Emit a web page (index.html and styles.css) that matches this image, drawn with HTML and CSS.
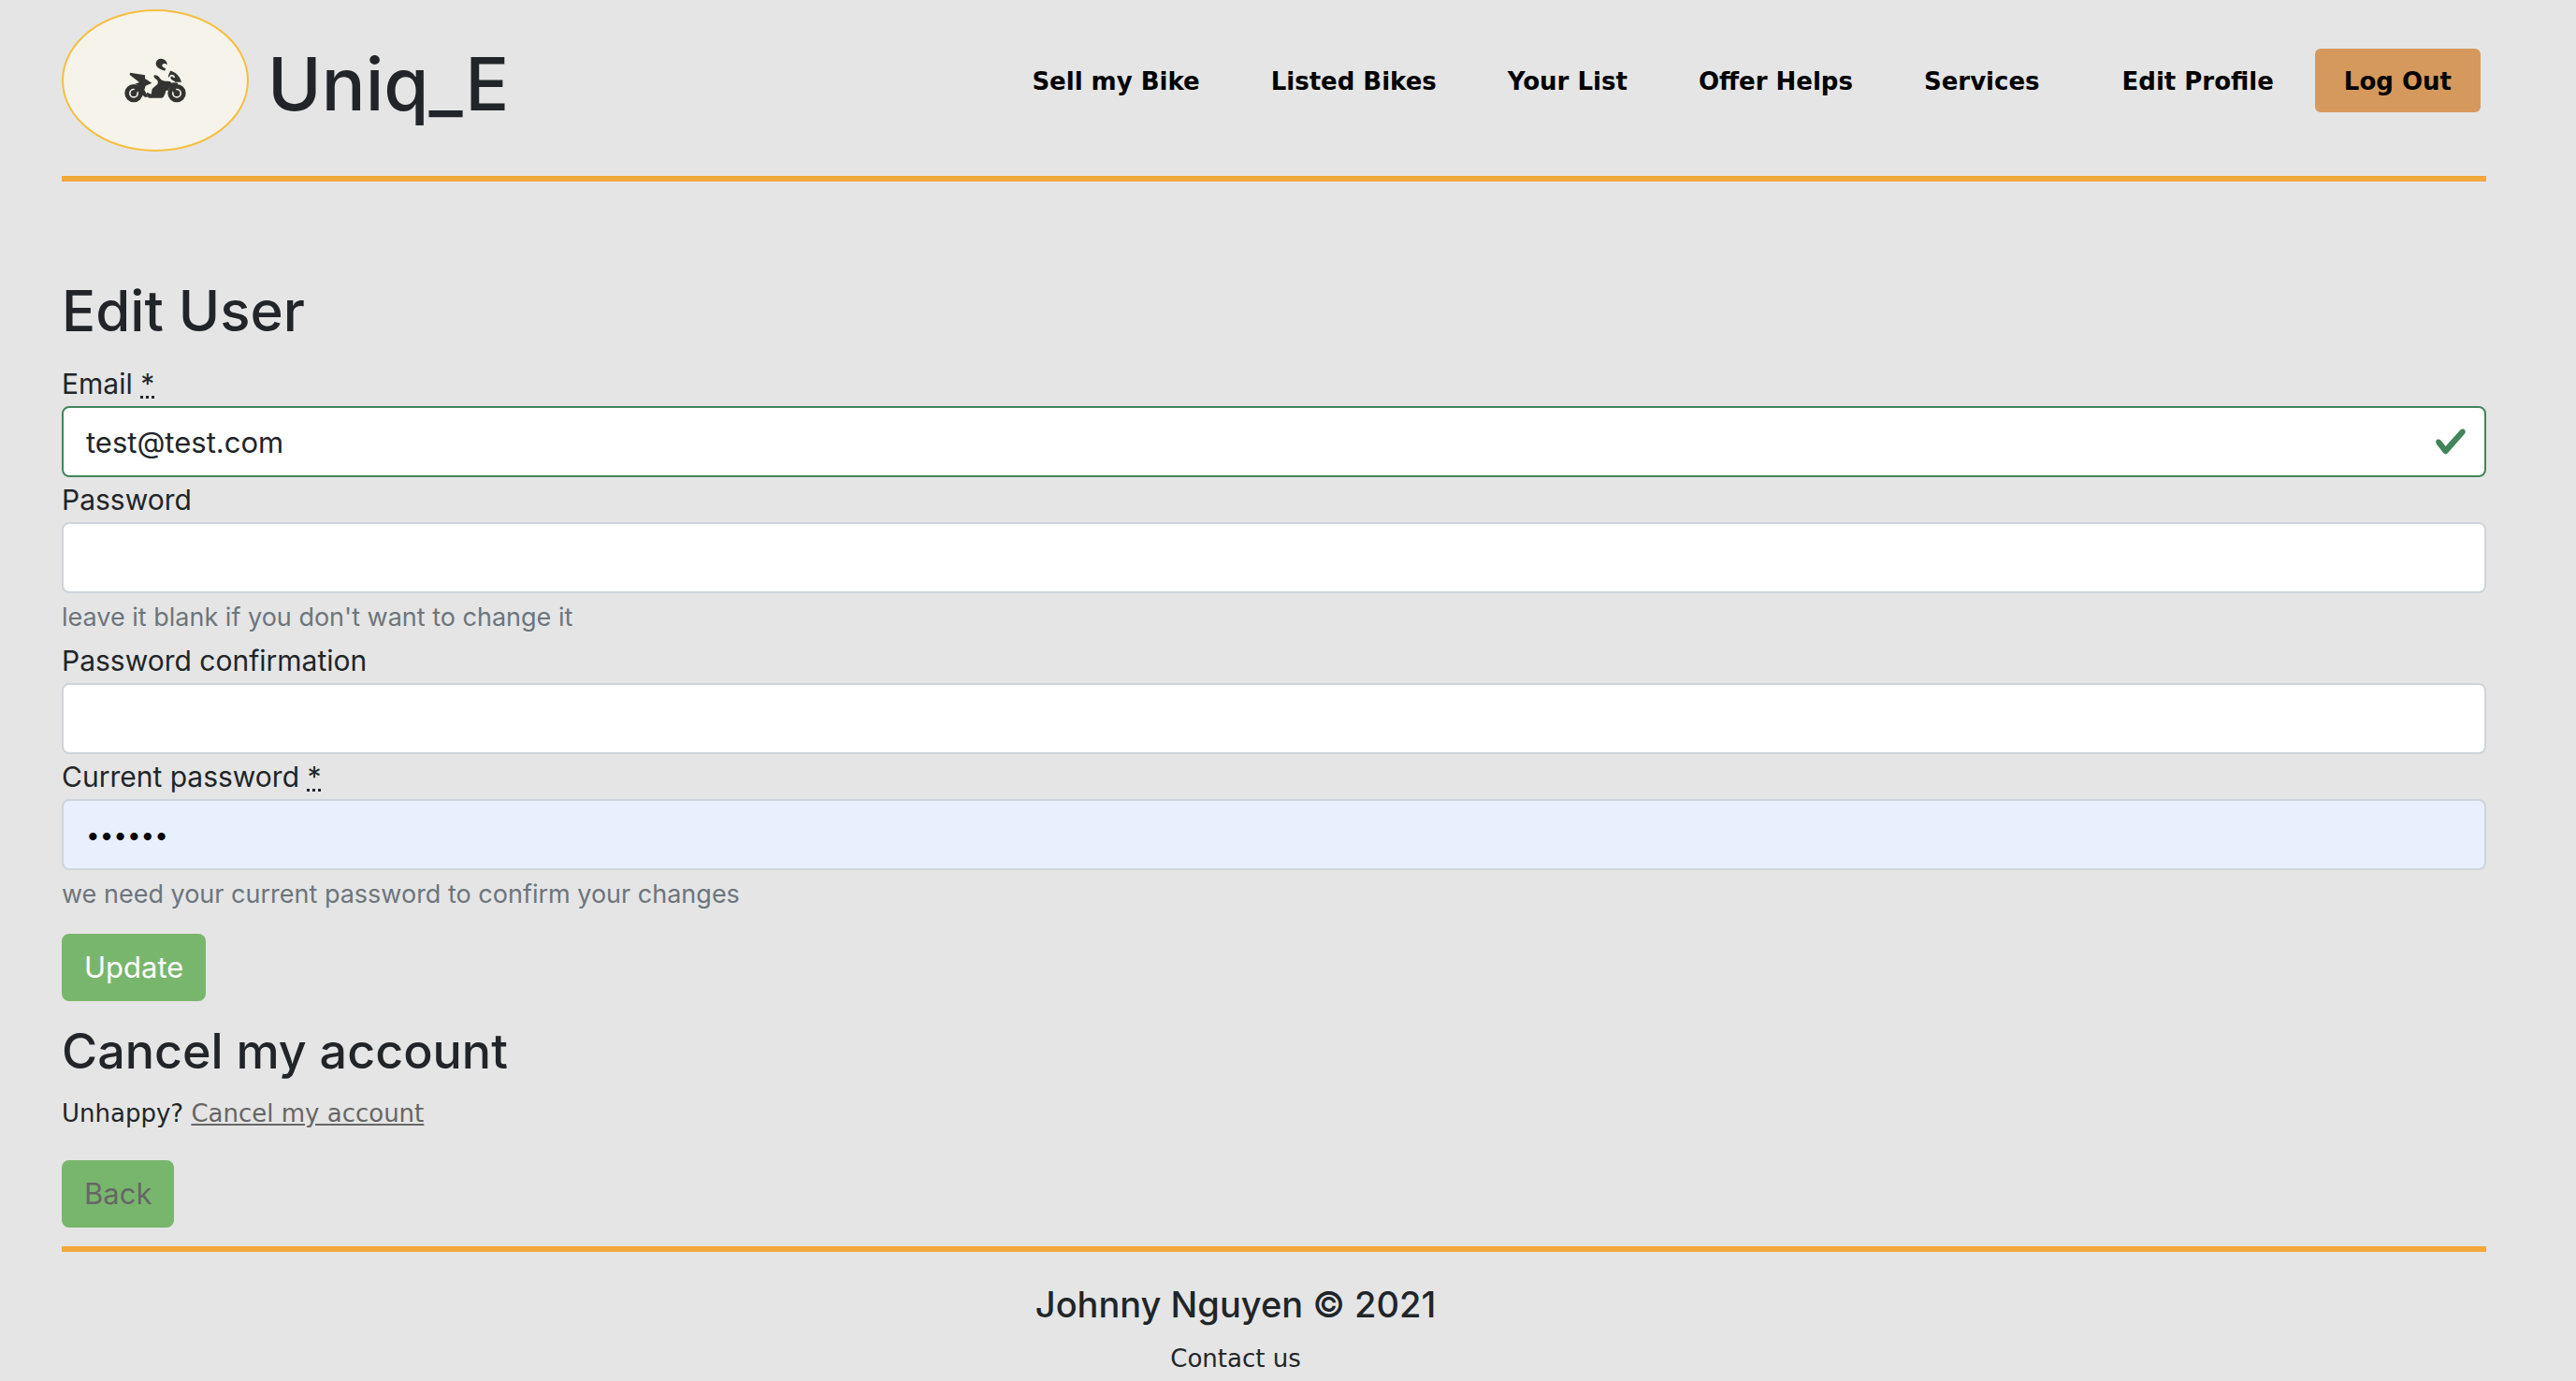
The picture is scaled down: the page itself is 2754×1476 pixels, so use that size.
FILE: index.html
```html
<!DOCTYPE html>
<html lang="en">
<head>
<meta charset="utf-8">
<meta name="viewport" content="width=device-width, initial-scale=1">
<title>Uniq_E</title>
<link rel="stylesheet" href="styles.css">
</head>
<body>
<header class="site-header">
  <a class="logo" href="#" aria-label="Home">
    <svg class="logo-bike" viewBox="0 0 198 144" aria-hidden="true">
      <g fill="none" stroke="#333331">
        <circle cx="30" cy="113" r="22" stroke-width="14"/>
        <circle cx="168" cy="113" r="22" stroke-width="14"/>
        <path stroke-width="12" stroke-linecap="round" d="M28 113L42 100M168 113L154 96"/>
      </g>
      <g fill="#333331">
        <circle cx="30" cy="113" r="10"/>
        <circle cx="168" cy="113" r="10"/>
        <path d="M101 16C103 6 112 1 121 3C131 5 138 13 137 22C130 15 121 17 121 24C121 30 130 31 133 35L129 41C117 37 99 31 101 16Z"/>
        <path d="M18 47L66 55L66 66L88 80L68 89L64 102L76 125H66L54 116C56 98 46 86 33 83L48 78L17 54Z"/>
        <path d="M94 56C103 50 113 62 118 70C126 76 136 73 148 76L151 83L139 88C133 100 133 113 126 124Q124 128 119 128H79C73 122 70 115 72 110L86 116L89 99L106 84C111 77 105 69 96 64Z"/>
        <path d="M140 59L147 41C164 44 178 58 183 77H163C158 70 148 71 148 62C149 58 157 58 158 64L162 63C162 54 150 51 146 56L143 62Z"/>
        <path d="M134 88C144 78 158 77 172 80L170 88C158 85 145 93 140 104H131Z"/>
      </g>
    </svg>
  </a>
  <h1 class="brand">Uniq_E</h1>
  <nav class="site-nav">
    <a href="#">Sell my Bike</a>
    <a href="#">Listed Bikes</a>
    <a href="#">Your List</a>
    <a href="#">Offer Helps</a>
    <a href="#">Services</a>
    <a class="nav-profile" href="#">Edit Profile</a>
    <button class="logout" type="button">Log Out</button>
  </nav>
</header>

<main class="content">
  <h2 class="page-title">Edit User</h2>
  <form class="user-form">
    <label class="label" for="email">Email <abbr title="required">*</abbr></label>
    <input class="field field-valid" id="email" type="email" value="test@test.com">
    <label class="label" for="password">Password</label>
    <input class="field" id="password" type="password" aria-describedby="password-hint">
    <small class="hint" id="password-hint">leave it blank if you don't want to change it</small>
    <label class="label" for="confirmation">Password confirmation</label>
    <input class="field" id="confirmation" type="password">
    <label class="label" for="current">Current password <abbr title="required">*</abbr></label>
    <input class="field field-filled" id="current" type="password" value="secret" aria-describedby="current-hint">
    <small class="hint" id="current-hint">we need your current password to confirm your changes</small>
    <button class="btn btn-update" type="submit">Update</button>
  </form>
  <h3 class="section-title">Cancel my account</h3>
  <p class="unhappy">Unhappy? <a href="#">Cancel my account</a></p>
  <a class="btn btn-back" href="#">Back</a>
</main>

<footer class="site-footer">
  <h4 class="author">Johnny Nguyen © 2021</h4>
  <p class="contact">Contact us</p>
</footer>
</body>
</html>
```
FILE: styles.css
```css
*, *::before, *::after { box-sizing: border-box; }

body {
  margin: 0;
  padding: 10px 96px 0 66px;
  background: #e5e5e5;
  color: #212529;
  font-family: Inter, "Liberation Sans", sans-serif;
  font-size: 30px;
  line-height: 48px;
}

h1, h2, h3, h4, p { margin: 0; font-weight: 500; }

.site-header {
  display: flex;
  align-items: center;
  padding-bottom: 26px;
  border-bottom: 6px solid #f2a73b;
}

.logo {
  display: flex;
  align-items: center;
  justify-content: center;
  width: 200px;
  height: 152px;
  border: 2px solid #f5bf42;
  border-radius: 50%;
  background: #f6f3ea;
}

.logo-bike { width: 66px; height: 48px; }

.brand {
  margin-left: 20px;
  padding-top: 8px;
  font-size: 78px;
  line-height: 96px;
}

.site-nav {
  display: flex;
  align-items: center;
  gap: 76px;
  margin-left: auto;
  padding-right: 6px;
  font-family: Verdana, "DejaVu Sans", sans-serif;
  font-size: 26px;
  font-weight: 700;
}

.site-nav a { padding-top: 2px; color: #000; text-decoration: none; }

.site-nav .nav-profile { margin: 0 -32px 0 12px; }

.logout {
  height: 68px;
  padding: 2px 31px 0;
  border: 0;
  border-radius: 6px;
  background: #d6995d;
  color: #000;
  font: inherit;
}

.content { padding: 100px 0 20px; }

.page-title {
  margin-bottom: 16px;
  font-size: 60px;
  line-height: 76px;
}

.user-form {
  display: flex;
  flex-direction: column;
  align-items: flex-start;
}

.label { height: 48px; }

.label abbr { text-decoration: underline dotted; }

.field {
  width: 100%;
  height: 76px;
  padding: 0 24px;
  border: 2px solid #ced4da;
  border-radius: 8px;
  background: #fff;
  color: #212529;
  font: inherit;
  font-size: 31px;
}

.field-valid {
  padding-right: 72px;
  border-color: #42855a;
  background: #fff url("data:image/svg+xml,%3csvg xmlns='http://www.w3.org/2000/svg' viewBox='0 0 8 8'%3e%3cpath fill='%2342855a' d='M2.3 6.73L.6 4.53c-.4-1.04.46-1.4 1.1-.8l1.1 1.4 3.4-3.8c.6-.63 1.6-.27 1.2.7l-4 4.6c-.43.5-.8.4-1.1.1z'/%3e%3c/svg%3e") no-repeat right 18px center / 36px 36px;
}

.field-filled { background: #e8effd; color: #000; font-size: 26px; }

.hint {
  height: 48px;
  padding-top: 5px;
  color: #6c757d;
  font-size: 27px;
  line-height: 42px;
}

.btn {
  display: inline-block;
  height: 72px;
  padding: 0 24px;
  border: 0;
  border-radius: 8px;
  background: #79b66d;
  color: #fff;
  font: inherit;
  font-size: 31px;
  line-height: 72px;
  text-decoration: none;
}

.btn-update { margin-top: 20px; }

.btn-back { display: block; width: max-content; color: #666; }

.section-title {
  margin: 20px 0 16px;
  font-size: 52px;
  line-height: 68px;
}

.unhappy, .contact {
  font-family: Verdana, "DejaVu Sans", sans-serif;
  font-size: 26px;
  font-weight: 400;
  line-height: 32px;
}

.unhappy { margin-bottom: 34px; }

.unhappy a { color: #666; }

.site-footer {
  padding: 32px 82px 4px 0;
  border-top: 6px solid #f2a73b;
  text-align: center;
}

.author {
  margin-bottom: 18px;
  font-size: 38px;
  line-height: 48px;
}
```
